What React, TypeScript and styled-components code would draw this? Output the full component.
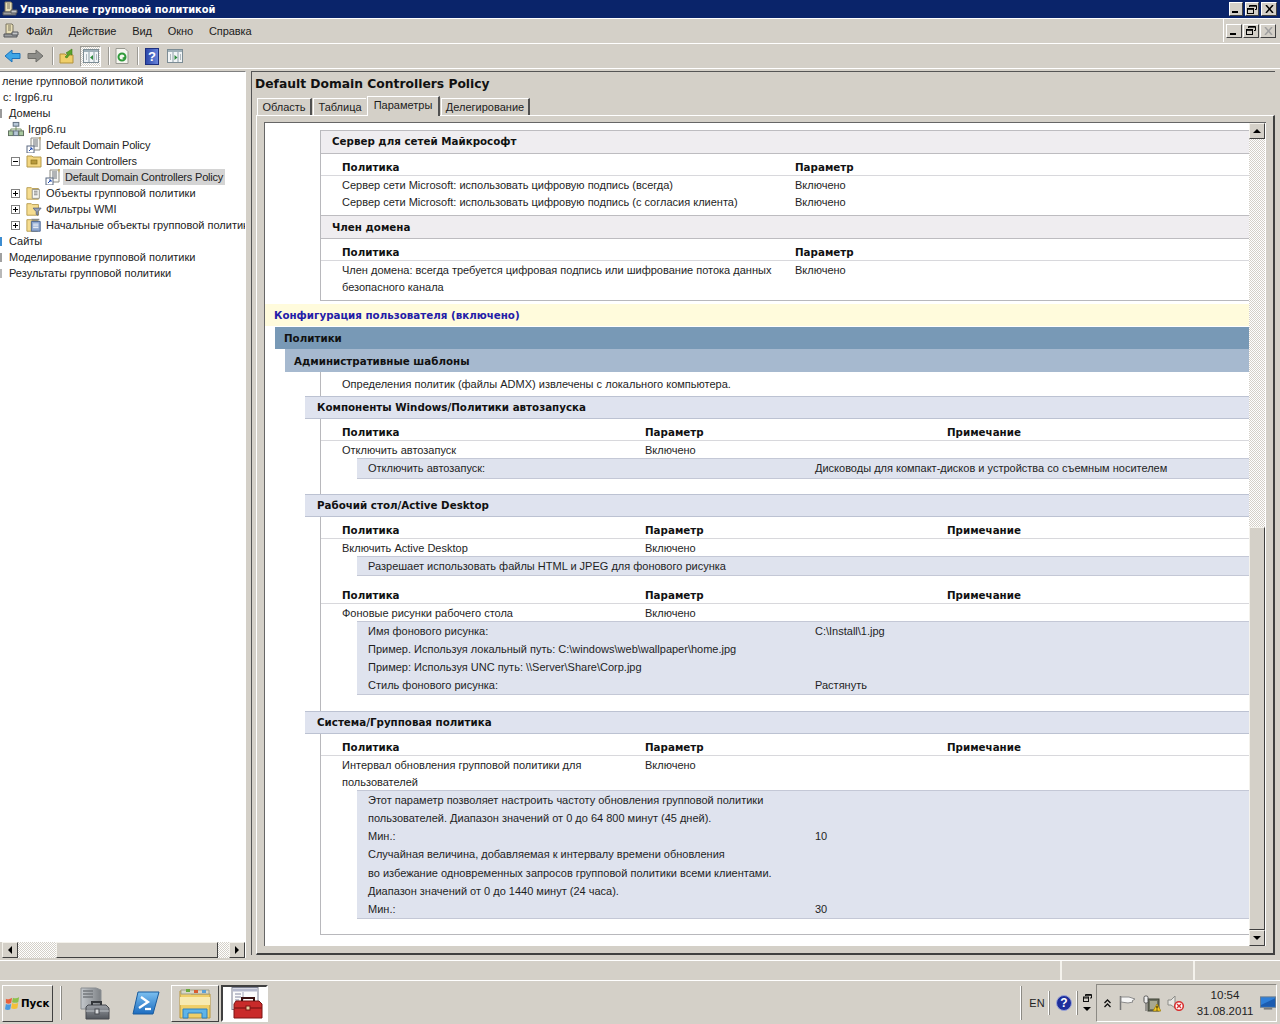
import React from "react";
import styled, { createGlobalStyle } from "styled-components";

const Global = createGlobalStyle`
  html, body { margin: 0; padding: 0; background: #d4d0c8; }
  * { box-sizing: border-box; }
  #root { width: 1280px; height: 1024px; overflow: hidden; }
`;

const face = `#d4d0c8`;
const dark = `#808080`;
const uiFont = `"Liberation Sans", Arial, sans-serif`;
const boldFont = `"DejaVu Sans", Verdana, sans-serif`;

const Desktop = styled.div`
  width: 1280px; height: 1024px; display: flex; flex-direction: column;
  background: ${face}; font: 11px/16px ${uiFont}; color: #1c1c1c; overflow: hidden;
`;
const TitleBar = styled.div`
  height: 18px; flex: none; background: #0a246a; display: flex; align-items: center;
  padding: 0 3px 0 2px; gap: 2px; color: #fff; font: bold 9.9px/16px ${boldFont};
`;
const TitleText = styled.span`flex: 1; padding-top: 1px;`;
const WinButtons = styled.div<{ $gap?: number }>`display: flex; gap: ${p => p.$gap ?? 2}px;`;
const WinBtn = styled.div<{ $w?: number; $off?: boolean }>`
  width: ${p => p.$w ?? 14}px; height: 14px; background: ${face}; display: flex; align-items: center; justify-content: center;
  border: 1px solid; border-color: #fff #404040 #404040 #fff; color: ${p => (p.$off ? "#a0a0a0" : "#000")};
`;
const MenuBar = styled.div`
  height: 26px; flex: none; display: flex; align-items: center; padding: 0 4px 1px 3px;
  border-top: 1px solid #fff; border-bottom: 1px solid #fff;
`;
const MenuItems = styled.div`flex: 1; display: flex; gap: 16px; padding-left: 7px; font-size: 11px; letter-spacing: -0.1px;`;
const MenuRight = styled.div`
  align-self: stretch; width: 53px; border-left: 1px solid #fff; display: flex; align-items: center; justify-content: flex-end;
`;
const ToolBar = styled.div`
  height: 25px; flex: none; display: flex; align-items: center; padding: 0 4px;
  border-bottom: 1px solid #fff;
`;
const ToolSlot = styled.div<{ $ml?: number }>`display: flex; flex: none; margin-left: ${p => p.$ml ?? 0}px;`;
const ToolSep = styled.div<{ $ml: number }>`
  width: 2px; height: 18px; flex: none; border-left: 1px solid #9c9a94; border-right: 1px solid #fff; margin-left: ${p => p.$ml}px;
`;
const Dither = styled.div`
  background-image: conic-gradient(#fff 25%, #d4d0c8 0 50%, #fff 0 75%, #d4d0c8 0); background-size: 2px 2px;
`;
const ToolPressed = styled(Dither)`
  width: 21px; height: 21px; margin-left: 5px; flex: none; display: flex; align-items: center; justify-content: center;
  border: 1px solid; border-color: #9c9a94 #fff #fff #9c9a94;
`;
const Main = styled.div`flex: 1; min-height: 0; display: flex; padding-top: 2px; padding-bottom: 2px;`;

const TreePane = styled.div`
  width: 246px; flex: none; background: #fff; display: flex; flex-direction: column;
  border-top: 1px solid ${dark}; border-right: 1px solid #fff;
`;
const TreeList = styled.div`flex: 1; min-height: 0; overflow: hidden; padding-top: 1px;`;
const TreeRow = styled.div<{ $pad: number }>`
  height: 16px; display: flex; align-items: center; white-space: nowrap; padding-left: ${p => p.$pad}px; font-size: 11px; position: relative; color: #222;
`;
const Expander = styled.span`
  width: 9px; height: 9px; flex: none; border: 1px solid ${dark}; margin-right: 6px; position: relative; background: #fff;
  &::before { content: ""; position: absolute; left: 1px; right: 1px; top: 3px; height: 1px; background: #000; }
`;
const ExpanderPlus = styled(Expander)`
  &::after { content: ""; position: absolute; top: 1px; bottom: 1px; left: 3px; width: 1px; background: #000; }
`;
const TreeIcon = styled.span`width: 16px; height: 16px; flex: none; margin-right: 2px; display: flex;`;
const TreeLabel = styled.span<{ $sel?: boolean; $latin?: boolean }>`
  padding: 0 2px; background: ${p => (p.$sel ? "#d4d4d4" : "transparent")}; letter-spacing: ${p => (p.$latin ? "-0.19px" : "0")};
`;
const Sliver = styled.span<{ $c: string }>`
  position: absolute; left: 0; top: 4px; width: 2px; height: 9px; background: ${p => p.$c};
`;
const HScroll = styled.div`height: 16px; flex: none; display: flex; background: ${face}; padding-left: 2px;`;
const HTrack = styled(Dither)<{ $w: number }>`width: ${p => p.$w}px; flex: none;`;
const SBtn = styled.div`
  width: 16px; height: 16px; flex: none; background: ${face}; display: flex; align-items: center; justify-content: center;
  border: 1px solid; border-color: #f4f2ec #404040 #404040 #f4f2ec;
`;
const Thumb = styled.div`
  background: ${face}; border: 1px solid; border-color: #f4f2ec #404040 #404040 #f4f2ec;
`;
const HThumb = styled(Thumb)<{ $w: number }>`width: ${p => p.$w}px; flex: none;`;

const RightPane = styled.div`
  flex: 1; min-width: 0; margin: 0 5px 3px 5px; display: flex; flex-direction: column;
  border-left: 1px solid #555; border-top: 1px solid #555;
`;
const PaneTitle = styled.div`
  height: 25px; flex: none; padding: 4px 0 0 3px; font: bold 12.3px/17px ${boldFont}; color: #111;
`;
const TabStrip = styled.div`height: 18px; flex: none; display: flex; align-items: flex-end; padding-left: 5px; gap: 1px;`;
const Tab = styled.div<{ $active?: boolean; $flat?: boolean; $w: number }>`
  width: ${p => p.$w}px; height: ${p => (p.$active ? 20 : 17)}px; text-align: center; font-size: 11px; line-height: ${p => (p.$active ? 17 : 16)}px;
  border-top: 1px solid #fff; border-left: 1px solid #fff; border-right: ${p => (p.$flat ? "0" : "2px solid #505050")}; margin-bottom: ${p => (p.$active ? -1 : 0)}px;
  position: relative; background: ${face}; white-space: nowrap;
`;
const TabPage = styled.div`
  flex: 1; min-height: 0; margin-left: 4px; padding: 6px 7px 7px 7px; display: flex; flex-direction: column;
  border-top: 1px solid #fff; border-left: 1px solid #fff; border-right: 2px solid #404040; border-bottom: 2px solid #404040;
`;
const Frame = styled.div`flex: 1; min-height: 0; display: flex; border-top: 1px solid #666; border-left: 1px solid #666; background: #fff;`;
const Report = styled.div`width: 984px; flex: none; overflow: hidden; background: #fff; font-size: 11px; color: #1e1e1e;`;
const VScroll = styled.div`width: 16px; flex: none; display: flex; flex-direction: column;`;
const VTrack = styled(Dither)`height: 388px; flex: none;`;
const VThumb = styled(Thumb)`flex: 1;`;

const Space = styled.div<{ $h: number }>`height: ${p => p.$h}px;`;
const Indent = styled.div`margin-left: 55px; border-left: 1px solid #b8b8bc; border-bottom: 1px solid #b8b8bc; width: 929px;`;
const SubHead = styled.div<{ $lh: number }>`
  height: 24px; background: #efedf0; border-top: 1px solid #bdbcc0; border-bottom: 1px solid #bdbcc0; padding-left: 11px;
  font: bold 10.3px/${p => p.$lh}px ${boldFont}; color: #111;
`;
const Band = styled.div<{ $bg: string; $left: number; $color?: string; $h: number; $lh: number; $pad: number }>`
  height: ${p => p.$h}px; margin-left: ${p => p.$left}px; background: ${p => p.$bg}; padding-left: ${p => p.$pad}px;
  font: bold 10.3px/${p => p.$lh}px ${boldFont}; color: ${p => p.$color ?? "#111"}; width: ${p => 984 - p.$left}px;
`;
const Cols = styled.div<{ $a: number; $b?: number }>`
  display: grid; grid-template-columns: ${p => p.$a}px ${p => (p.$b ? `${p.$b}px` : "")} 1fr; padding-left: 21px;
`;
const ColHead = styled(Cols)`
  height: 22px; align-items: end; border-bottom: 1px solid #d8d8dc; font: bold 10.3px/16px ${boldFont}; color: #111;
`;
const Row = styled(Cols)<{ $h?: number; $lh?: number }>`height: ${p => p.$h ?? 18}px; line-height: ${p => p.$lh ?? p.$h ?? 18}px;`;
const TwoLine = styled.div`padding-top: 1px; line-height: 17px; white-space: pre-line;`;
const Note = styled.div`height: 24px; line-height: 24px; padding-left: 21px;`;
const Head = styled.div`
  height: 23px; margin-left: -16px; background: #dfe3ef; border-top: 1px solid #bcc2d2; border-bottom: 1px solid #bcc2d2;
  padding-left: 12px; font: bold 10.3px/21px ${boldFont}; color: #111;
`;
const Detail = styled.div`
  margin-left: 36px; background: #dfe3ee; padding-left: 11px; border-top: 1px solid #c4c8d6; border-bottom: 1px solid #c4c8d6; margin-top: -1px; margin-bottom: -1px;
`;
const DRow = styled.div<{ $h?: number }>`
  display: grid; grid-template-columns: 447px 1fr; height: ${p => p.$h ?? 18}px; line-height: ${p => p.$h ?? 18}px; white-space: nowrap;
`;

const StatusBar = styled.div`
  height: 21px; flex: none; display: flex; border-top: 1px solid #fff; border-bottom: 1px solid #fff;
`;
const StatusCell = styled.div<{ $w?: number }>`
  ${p => (p.$w ? `width: ${p.$w}px; flex: none; border-left: 2px solid #f4f2ec;` : "flex: 1;")}
`;
const Taskbar = styled.div`height: 43px; flex: none; display: flex; align-items: center; padding: 1px 3px 0 2px;`;
const StartBtn = styled.div`
  width: 51px; height: 37px; flex: none; display: flex; align-items: center; gap: 1px; padding-left: 2px;
  border: 1px solid; border-color: #fff #404040 #404040 #fff; font: bold 10.3px ${boldFont}; color: #000;
`;
const TaskSep = styled.div<{ $h?: number; $ml?: number; $mr?: number }>`
  width: 2px; flex: none; height: ${p => p.$h ?? 34}px; border-left: 1px solid #fff; border-right: 1px solid #8c8a84;
  margin-left: ${p => p.$ml ?? 0}px; margin-right: ${p => p.$mr ?? 0}px;
`;
const QuickSlot = styled.div<{ $w: number; $ml?: number }>`
  width: ${p => p.$w}px; height: 37px; flex: none; display: flex; align-items: center; justify-content: center; margin-left: ${p => p.$ml ?? 0}px;
`;
const TaskRaised = styled(QuickSlot)`border: 1px solid; border-color: #fff #404040 #404040 #fff;`;
const TaskActive = styled(QuickSlot)`border: 2px solid; border-color: #404040 #fff #fff #404040; background: #fff;`;
const Grow = styled.div`flex: 1;`;
const Lang = styled.div`font-size: 11px; width: 26px; padding-left: 4px; text-align: center; flex: none; color: #222;`;
const Tray = styled.div`
  width: 181px; height: 38px; flex: none; display: flex; align-items: center; border: 1px solid; border-color: #8c8a84 #fff #fff #8c8a84; padding-left: 7px;
`;
const Clock = styled.div`width: 60px; margin: 0 5px 0 11px; text-align: center; font-size: 11.5px; line-height: 16px; color: #222; flex: none;`;
const Chevrons = styled.div`width: 8px; display: flex; flex: none; margin-right: 7px;`;
const TrayIcon = styled.div<{ $mr: number }>`display: flex; flex: none; margin-right: ${p => p.$mr}px;`;
const MiniStack = styled.div`width: 18px; display: flex; flex-direction: column; align-items: center; gap: 3px; flex: none;`;

const Minus = () => <svg width="8" height="8" viewBox="0 0 8 8"><rect x="0" y="6" width="6" height="2" fill="currentColor" /></svg>;
const Restore = () => (
  <svg width="10" height="9" viewBox="0 0 10 9" fill="none" stroke="currentColor">
    <path d="M2.500 2V.5h7v4H8" /><path d="M2.500 1.200h7" /><rect x=".5" y="3.500" width="6" height="5" /><path d="M.5 4.300h6" />
  </svg>
);
const Cross = () => (
  <svg width="9" height="8" viewBox="0 0 9 8" stroke="currentColor" strokeWidth="1.500" fill="none"><path d="M1 0l7 8M8 0L1 8" /></svg>
);
const Arrow = ({ d }: { d: "l" | "r" | "u" | "d" }) => {
  const p = { l: "M6 0v8L2 4z", r: "M2 0v8l4-4z", u: "M0 6h8L4 2z", d: "M0 2h8L4 6z" }[d];
  return <svg width="8" height="8" viewBox="0 0 8 8"><path d={p} fill="#000" /></svg>;
};

const MmcIcon = () => (
  <svg width="16" height="16" viewBox="0 0 16 16">
    <path d="M3 1h6l1 1v9H3z" fill="#e9dfb6" stroke="#7a7460" />
    <path d="M5 3h3M5 5h3M5 7h3" stroke="#7a7460" />
    <path d="M1 11h13v3H1z" fill="#9a9c9e" stroke="#55575a" />
    <path d="M9 9h6v3H9z" fill="#c4c6c8" stroke="#55575a" />
  </svg>
);
const BackIcon = ({ gray }: { gray?: boolean }) => (
  <svg width="17" height="14" viewBox="0 0 17 14">
    {gray ? (
      <path d="M1 4.500h8V1l7 6-7 6V9.500H1z" fill="#8d8d89" stroke="#6e6e6a" />
    ) : (
      <path d="M16 4.500H8V1L1 7l7 6V9.500h8z" fill="#3fa6e6" stroke="#1d72bb" />
    )}
  </svg>
);
const UpFolder = () => (
  <svg width="16" height="16" viewBox="0 0 16 16">
    <path d="M1 6h5l1 1h7v8H1z" fill="#f0cf6a" stroke="#b3923a" />
    <path d="M6 9l3-3-2-1 6-4v6l-2-1-3 4z" fill="#5aa52c" stroke="#3c7b18" strokeWidth=".6" />
  </svg>
);
const PaneIcon = ({ mirror }: { mirror?: boolean }) => (
  <svg width="16" height="14" viewBox="0 0 16 14">
    <rect x=".5" y=".5" width="15" height="13" fill="#f2f5f7" stroke="#7c8c94" />
    <rect x="1" y="1" width="14" height="2" fill="#9fb0b8" />
    <path d="M6 3v10M11 3v10" stroke="#8da0a8" />
    <path d="M3 6h1M3 8h1M3 10h1M13 6h1M13 8h1M13 10h1" stroke="#6e8088" />
    <path d={mirror ? "M7.500 6v5l3-2.500z" : "M10 6v5L7 8.500z"} fill="#2e8b3e" />
  </svg>
);
const RefreshIcon = () => (
  <svg width="14" height="16" viewBox="0 0 14 16">
    <path d="M1 .5h9l3 3v12H1z" fill="#f6f6f0" stroke="#9a9a92" />
    <circle cx="7" cy="9" r="3.500" fill="none" stroke="#2f9a3a" strokeWidth="2" />
    <path d="M10 12l1-4-4 2z" fill="#2f9a3a" />
  </svg>
);
const HelpBook = () => (
  <svg width="14" height="17" viewBox="0 0 14 17">
    <defs><linearGradient id="hb" x1="0" x2="1"><stop offset="0" stopColor="#2a46a8" /><stop offset="1" stopColor="#6a86dc" /></linearGradient></defs>
    <rect x=".5" y=".5" width="13" height="16" fill="url(#hb)" stroke="#1c2f80" />
    <text x="7" y="13" textAnchor="middle" fontFamily="Liberation Sans" fontWeight="700" fontSize="13" fill="#fff">?</text>
  </svg>
);
const PolicyIcon = () => (
  <svg width="16" height="16" viewBox="0 0 16 16">
    <path d="M5 1h9v12H5z" fill="#f8f8f4" stroke="#8c8c84" />
    <path d="M7 3h5M7 5h5M7 7h5M7 9h5" stroke="#6a7078" />
    <path d="M13 0l2 0-1 4z" fill="#c8a850" />
    <rect x="1" y="9" width="7" height="7" fill="#fff" stroke="#5a6880" />
    <path d="M3 14l3-3M4 11h2v2" stroke="#1c48b0" fill="none" />
  </svg>
);
const OuFolder = () => (
  <svg width="16" height="16" viewBox="0 0 16 16">
    <path d="M1 3h5l1 1h8v10H1z" fill="#f3d680" stroke="#b59a4c" />
    <rect x="5" y="7" width="6" height="4" fill="#b89a3c" stroke="#86701f" strokeWidth=".7" />
  </svg>
);
const GpoFolder = () => (
  <svg width="18" height="16" viewBox="0 0 18 16">
    <path d="M1 2h5l1 1h7v12H1z" fill="#f6dd90" stroke="#b59a4c" />
    <path d="M7 4h8v10H7z" fill="#f8f8f4" stroke="#8c8c84" />
    <path d="M9 6h4M9 8h4M9 10h4" stroke="#777" />
  </svg>
);
const WmiFolder = () => (
  <svg width="18" height="16" viewBox="0 0 18 16">
    <path d="M1 2h5l1 1h7v12H1z" fill="#f6dd90" stroke="#b59a4c" />
    <path d="M8 7h9l-3.500 4v4l-2-1v-3z" fill="#9aa4b8" stroke="#5e6880" />
  </svg>
);
const StarterFolder = () => (
  <svg width="18" height="16" viewBox="0 0 18 16">
    <path d="M1 2h5l1 1h6v12H1z" fill="#f6dd90" stroke="#b59a4c" />
    <path d="M6 4h10v11H6z" fill="#8fa8d0" stroke="#44608e" />
    <path d="M8 7h6M8 9h6M8 11h6" stroke="#fff" />
    <path d="M6 1h9v2H6z" fill="#8c8c84" />
  </svg>
);
const DomainIcon = () => (
  <svg width="17" height="16" viewBox="0 0 17 16">
    <path d="M8.500 5v3M3 8h11M3 8v2M14 8v2M8.500 8v2" stroke="#6d8a5a" />
    <rect x="5.500" y="1" width="6" height="4" fill="#b8c8d8" stroke="#5c6c7c" />
    <rect x="0.500" y="10" width="5" height="5" fill="#a8c8a0" stroke="#5c6c5c" />
    <rect x="6" y="10" width="5" height="5" fill="#b8c8d8" stroke="#5c6c7c" />
    <rect x="11.500" y="10" width="5" height="5" fill="#a8c8a0" stroke="#5c6c5c" />
  </svg>
);
const Orb = () => (
  <svg width="15" height="15" viewBox="0 0 17 17">
    <path d="M1 3c2 1 4 1 7-1l-1 6c-2 1-4 1-6 0z" fill="#e8603c" />
    <path d="M9 2c2 1 4 1 7-1l-1 6c-2 1-5 1-7 0z" fill="#8cc04c" />
    <path d="M1 9c2 1 4 1 6 0l-1 6c-2 1-4 1-6 0z" fill="#4a9ae0" />
    <path d="M8 8c2 1 4 1 7 0l-1 6c-2 1-5 1-7 0z" fill="#f4c038" />
  </svg>
);
const ServerManager = () => (
  <svg width="30" height="33" viewBox="0 0 30 33">
    <defs>
      <linearGradient id="tw" x1="0" x2="1"><stop offset="0" stopColor="#c4c8cc" /><stop offset="1" stopColor="#7c8084" /></linearGradient>
      <linearGradient id="tb" x1="0" y1="0" y2="1" x2="0"><stop offset="0" stopColor="#9ca0a6" /><stop offset="1" stopColor="#52565c" /></linearGradient>
    </defs>
    <path d="M1 1h15l5 2v19H1z" fill="url(#tw)" stroke="#8a8e92" />
    <path d="M3 4h10M3 7h10M3 10h10" stroke="#74787c" strokeWidth="1.500" />
    <path d="M6 20l2-2h18l3 3v11H6z" fill="url(#tb)" stroke="#46494e" />
    <path d="M12 18v-3h9v3" fill="none" stroke="#33363a" strokeWidth="2" />
    <path d="M6 24h23" stroke="#c0c4c8" />
    <rect x="15" y="22" width="4" height="5" fill="#d8dadc" stroke="#46494e" />
  </svg>
);
const PowerShell = () => (
  <svg width="28" height="24" viewBox="0 0 28 24">
    <defs><linearGradient id="ps" x1="0" y1="0" x2="0" y2="1"><stop offset="0" stopColor="#7cc0f0" /><stop offset="1" stopColor="#1c6cc0" /></linearGradient></defs>
    <path d="M6 1h21l-6 22H1z" fill="url(#ps)" stroke="#185a9c" />
    <path d="M9 6l7 5-9 6" fill="none" stroke="#fff" strokeWidth="2.300" />
    <path d="M13 18h6" stroke="#fff" strokeWidth="2.300" />
  </svg>
);
const ExplorerIcon = () => (
  <svg width="34" height="32" viewBox="0 0 34 32">
    <path d="M2 4h9l2 3h19v24H2z" fill="#f0cf68" stroke="#b8963c" />
    <path d="M3 7h28V3H3z" fill="#d8d8c8" stroke="#a0a088" />
    <rect x="8" y="2" width="4" height="3" fill="#6aa83c" />
    <rect x="16" y="3" width="4" height="3" fill="#d85c30" />
    <rect x="24" y="3" width="4" height="3" fill="#5aa0d8" />
    <path d="M2 10h30v8H2z" fill="#f8eab0" />
    <path d="M5 31v-9h24v9h-5v-5H10v5z" fill="#5fb4e8" stroke="#2f80c0" />
  </svg>
);
const ToolBoxWin = () => (
  <svg width="36" height="34" viewBox="0 0 36 34">
    <rect x="5" y="1.500" width="26" height="22" fill="#fbfbfb" stroke="#7a7e90" />
    <rect x="6" y="2.500" width="24" height="3" fill="#b4b8cc" />
    <path d="M8 8h6M8 11h6M8 14h4" stroke="#8488a0" />
    <path d="M16 6v8" stroke="#a0a4b8" />
    <path d="M7 18l2-3h23l3 3v14H7z" fill="#c92a2a" stroke="#7c1414" />
    <path d="M15 15v-3h12v3" fill="none" stroke="#3a1010" strokeWidth="2" />
    <path d="M7 22h28" stroke="#881818" strokeWidth="1.500" />
    <rect x="19" y="20" width="4" height="4" fill="#e8d0a0" stroke="#7c1414" />
  </svg>
);
const HelpRound = () => (
  <svg width="16" height="16" viewBox="0 0 16 16">
    <circle cx="8" cy="8" r="7.500" fill="#1e2f9c" stroke="#9aa4d8" />
    <text x="8" y="12" textAnchor="middle" fontFamily="Liberation Sans" fontWeight="700" fontSize="12" fill="#fff">?</text>
  </svg>
);
const MiniWins = () => (
  <svg width="9" height="8" viewBox="0 0 9 8" fill="none" stroke="#111">
    <path d="M2.500 2V.5h6v3.500H7" /><rect x=".5" y="3" width="5" height="4.500" /><path d="M.5 4h5M2.500 1.300h6" />
  </svg>
);
const DoubleUp = () => (
  <svg width="7" height="9" viewBox="0 0 7 9" fill="none" stroke="#111" strokeWidth="1.300"><path d="M.5 4L3.500 1l3 3M.5 8l3-3 3 3" /></svg>
);
const FlagIcon = () => (
  <svg width="17" height="16" viewBox="0 0 17 16">
    <path d="M1.500 1v14" stroke="#777" strokeWidth="1.500" />
    <path d="M2 2h8l6 2-3 2 1 1-5 1-7-1z" fill="#f6f6f6" stroke="#8c8c8c" />
  </svg>
);
const NetWarn = () => (
  <svg width="18" height="17" viewBox="0 0 18 17">
    <rect x="5" y="4" width="11" height="12" fill="#6c7060" stroke="#3c4034" />
    <rect x="7" y="6" width="7" height="8" fill="#a8a890" />
    <rect x="1" y="1" width="4" height="7" rx="1.500" fill="#eee" stroke="#555" />
    <path d="M3 8v8" stroke="#555" />
    <path d="M10 16l4-7 4 7z" fill="#f4c820" stroke="#9a7c10" strokeWidth=".7" />
    <path d="M14 11v2.500M14 14.500v1" stroke="#000" />
  </svg>
);
const SoundOff = () => (
  <svg width="17" height="16" viewBox="0 0 17 16">
    <path d="M1 5h3l4-4v12L4 10H1z" fill="#e8e8e4" stroke="#8c8c88" />
    <circle cx="12" cy="11" r="4.300" fill="#fff" stroke="#d83030" strokeWidth="1.600" />
    <path d="M10 9l4 4M14 9l-4 4" stroke="#d83030" strokeWidth="1.400" />
  </svg>
);
const MonitorIcon = () => (
  <svg width="16" height="14" viewBox="0 0 17 14">
    <rect x=".5" y=".5" width="16" height="11" fill="#2f7fd8" stroke="#6a7a8c" />
    <path d="M1 9l15-7v9H1z" fill="#1c5cb0" />
    <path d="M4 13h9" stroke="#7a7a7a" strokeWidth="2" />
  </svg>
);

const CA = 303, CB = 302, UP = 453;

export default function App() {
  return (
    <Desktop>
      <Global />
      <TitleBar>
        <MmcIcon />
        <TitleText>Управление групповой политикой</TitleText>
        <WinButtons>
          <WinBtn><Minus /></WinBtn>
          <WinBtn><Restore /></WinBtn>
          <WinBtn $w={16}><Cross /></WinBtn>
        </WinButtons>
      </TitleBar>
      <MenuBar>
        <MmcIcon />
        <MenuItems>
          <span>Файл</span><span>Действие</span><span>Вид</span><span>Окно</span><span>Справка</span>
        </MenuItems>
        <MenuRight>
          <WinButtons $gap={1}>
            <WinBtn $w={16}><Minus /></WinBtn>
            <WinBtn $w={16}><Restore /></WinBtn>
            <WinBtn $w={16} $off><Cross /></WinBtn>
          </WinButtons>
        </MenuRight>
      </MenuBar>
      <ToolBar>
        <ToolSlot><BackIcon /></ToolSlot>
        <ToolSlot $ml={6}><BackIcon gray /></ToolSlot>
        <ToolSep $ml={8} />
        <ToolSlot $ml={5}><UpFolder /></ToolSlot>
        <ToolPressed><PaneIcon /></ToolPressed>
        <ToolSep $ml={7} />
        <ToolSlot $ml={5}><RefreshIcon /></ToolSlot>
        <ToolSep $ml={8} />
        <ToolSlot $ml={6}><HelpBook /></ToolSlot>
        <ToolSlot $ml={8}><PaneIcon mirror /></ToolSlot>
      </ToolBar>
      <Main>
        <TreePane>
          <TreeList>
            <TreeRow $pad={0}><TreeLabel>ление групповой политикой</TreeLabel></TreeRow>
            <TreeRow $pad={1}><TreeLabel>c: Irgp6.ru</TreeLabel></TreeRow>
            <TreeRow $pad={7}><Sliver $c="#9a9a9a" /><TreeLabel>Домены</TreeLabel></TreeRow>
            <TreeRow $pad={8}><TreeIcon><DomainIcon /></TreeIcon><TreeLabel>Irgp6.ru</TreeLabel></TreeRow>
            <TreeRow $pad={26}><TreeIcon><PolicyIcon /></TreeIcon><TreeLabel $latin>Default Domain Policy</TreeLabel></TreeRow>
            <TreeRow $pad={11}><Expander /><TreeIcon><OuFolder /></TreeIcon><TreeLabel $latin>Domain Controllers</TreeLabel></TreeRow>
            <TreeRow $pad={45}><TreeIcon><PolicyIcon /></TreeIcon><TreeLabel $sel $latin>Default Domain Controllers Policy</TreeLabel></TreeRow>
            <TreeRow $pad={11}><ExpanderPlus /><TreeIcon><GpoFolder /></TreeIcon><TreeLabel>Объекты групповой политики</TreeLabel></TreeRow>
            <TreeRow $pad={11}><ExpanderPlus /><TreeIcon><WmiFolder /></TreeIcon><TreeLabel>Фильтры WMI</TreeLabel></TreeRow>
            <TreeRow $pad={11}><ExpanderPlus /><TreeIcon><StarterFolder /></TreeIcon><TreeLabel>Начальные объекты групповой политики</TreeLabel></TreeRow>
            <TreeRow $pad={7}><Sliver $c="#3c8cd0" /><TreeLabel>Сайты</TreeLabel></TreeRow>
            <TreeRow $pad={7}><Sliver $c="#a0a0a0" /><TreeLabel>Моделирование групповой политики</TreeLabel></TreeRow>
            <TreeRow $pad={7}><Sliver $c="#b8b8b8" /><TreeLabel>Результаты групповой политики</TreeLabel></TreeRow>
          </TreeList>
          <HScroll>
            <SBtn><Arrow d="l" /></SBtn>
            <HTrack $w={38} />
            <HThumb $w={162} />
            <HTrack $w={11} />
            <SBtn><Arrow d="r" /></SBtn>
          </HScroll>
        </TreePane>
        <RightPane>
          <PaneTitle>Default Domain Controllers Policy</PaneTitle>
          <TabStrip>
            <Tab $w={55}>Область</Tab>
            <Tab $w={53} $flat>Таблица</Tab>
            <Tab $w={73} $active>Параметры</Tab>
            <Tab $w={89}>Делегирование</Tab>
          </TabStrip>
          <TabPage>
            <Frame>
              <Report>
                <Space $h={7} />
                <Indent>
                  <SubHead $lh={20}>Сервер для сетей Майкрософт</SubHead>
                  <ColHead $a={UP}><span>Политика</span><span>Параметр</span></ColHead>
                  <Row $a={UP} $h={17} $lh={19}><span>Сервер сети Microsoft: использовать цифровую подпись (всегда)</span><span>Включено</span></Row>
                  <Row $a={UP} $h={17} $lh={19}><span>Сервер сети Microsoft: использовать цифровую подпись (с согласия клиента)</span><span>Включено</span></Row>
                  <Space $h={5} />
                  <SubHead $lh={22}>Член домена</SubHead>
                  <ColHead $a={UP}><span>Политика</span><span>Параметр</span></ColHead>
                  <Row $a={UP} $h={34}>
                    <TwoLine>{"Член домена: всегда требуется цифровая подпись или шифрование потока данных\nбезопасного канала"}</TwoLine>
                    <TwoLine>Включено</TwoLine>
                  </Row>
                  <Space $h={5} />
                </Indent>
                <Space $h={3} />
                <Band $bg="#fffbdc" $left={0} $h={22} $lh={22} $pad={9} $color="#2420a8">Конфигурация пользователя (включено)</Band>
                <Space $h={1} />
                <Band $bg="#7899b6" $left={10} $h={22} $lh={22} $pad={9}>Политики</Band>
                <Band $bg="#a6b9cf" $left={20} $h={23} $lh={25} $pad={9}>Административные шаблоны</Band>
                <Indent>
                  <Note>Определения политик (файлы ADMX) извлечены с локального компьютера.</Note>
                  <Head>Компоненты Windows/Политики автозапуска</Head>
                  <ColHead $a={CA} $b={CB}><span>Политика</span><span>Параметр</span><span>Примечание</span></ColHead>
                  <Row $a={CA} $b={CB}><span>Отключить автозапуск</span><span>Включено</span></Row>
                  <Detail>
                    <DRow $h={19}><span>Отключить автозапуск:</span><span>Дисководы для компакт-дисков и устройства со съемным носителем</span></DRow>
                  </Detail>
                  <Space $h={16} />
                  <Head>Рабочий стол/Active Desktop</Head>
                  <ColHead $a={CA} $b={CB}><span>Политика</span><span>Параметр</span><span>Примечание</span></ColHead>
                  <Row $a={CA} $b={CB}><span>Включить Active Desktop</span><span>Включено</span></Row>
                  <Detail>
                    <DRow><span>Разрешает использовать файлы HTML и JPEG для фонового рисунка</span></DRow>
                  </Detail>
                  <Space $h={7} />
                  <ColHead $a={CA} $b={CB}><span>Политика</span><span>Параметр</span><span>Примечание</span></ColHead>
                  <Row $a={CA} $b={CB}><span>Фоновые рисунки рабочего стола</span><span>Включено</span></Row>
                  <Detail>
                    <DRow><span>Имя фонового рисунка:</span><span>C:\Install\1.jpg</span></DRow>
                    <DRow><span>Пример. Используя локальный путь: C:\windows\web\wallpaper\home.jpg</span></DRow>
                    <DRow><span>Пример: Используя UNC путь: \\Server\Share\Corp.jpg</span></DRow>
                    <DRow><span>Стиль фонового рисунка:</span><span>Растянуть</span></DRow>
                  </Detail>
                  <Space $h={17} />
                  <Head>Система/Групповая политика</Head>
                  <ColHead $a={CA} $b={CB}><span>Политика</span><span>Параметр</span><span>Примечание</span></ColHead>
                  <Row $a={CA} $b={CB} $h={35}>
                    <TwoLine>{"Интервал обновления групповой политики для\nпользователей"}</TwoLine>
                    <TwoLine>Включено</TwoLine>
                  </Row>
                  <Detail>
                    <DRow><span>Этот параметр позволяет настроить частоту обновления групповой политики</span></DRow>
                    <DRow><span>пользователей. Диапазон значений от 0 до 64 800 минут (45 дней).</span></DRow>
                    <DRow><span>Мин.:</span><span>10</span></DRow>
                    <DRow $h={19}><span>Случайная величина, добавляемая к интервалу времени обновления</span></DRow>
                    <DRow><span>во избежание одновременных запросов групповой политики всеми клиентами.</span></DRow>
                    <DRow><span>Диапазон значений от 0 до 1440 минут (24 часа).</span></DRow>
                    <DRow><span>Мин.:</span><span>30</span></DRow>
                  </Detail>
                  <Space $h={16} />
                </Indent>
              </Report>
              <VScroll>
                <SBtn><Arrow d="u" /></SBtn>
                <VTrack />
                <VThumb />
                <SBtn><Arrow d="d" /></SBtn>
              </VScroll>
            </Frame>
          </TabPage>
        </RightPane>
      </Main>
      <StatusBar>
        <StatusCell />
        <StatusCell $w={133} />
        <StatusCell $w={87} />
      </StatusBar>
      <Taskbar>
        <StartBtn><Orb />Пуск</StartBtn>
        <TaskSep $ml={7} />
        <QuickSlot $w={48} $ml={9}><ServerManager /></QuickSlot>
        <QuickSlot $w={50} $ml={2}><PowerShell /></QuickSlot>
        <TaskRaised $w={48}><ExplorerIcon /></TaskRaised>
        <TaskActive $w={47} $ml={2}><ToolBoxWin /></TaskActive>
        <Grow />
        <TaskSep />
        <Lang>EN</Lang>
        <TaskSep $h={24} $mr={6} />
        <HelpRound />
        <TaskSep $h={24} $ml={4} />
        <MiniStack><MiniWins /><Arrow d="d" /></MiniStack>
        <Tray>
          <Chevrons><DoubleUp /></Chevrons>
          <TrayIcon $mr={7}><FlagIcon /></TrayIcon>
          <TrayIcon $mr={6}><NetWarn /></TrayIcon>
          <SoundOff />
          <Clock>10:54<br />31.08.2011</Clock>
          <TrayIcon $mr={0}><MonitorIcon /></TrayIcon>
        </Tray>
      </Taskbar>
    </Desktop>
  );
}
